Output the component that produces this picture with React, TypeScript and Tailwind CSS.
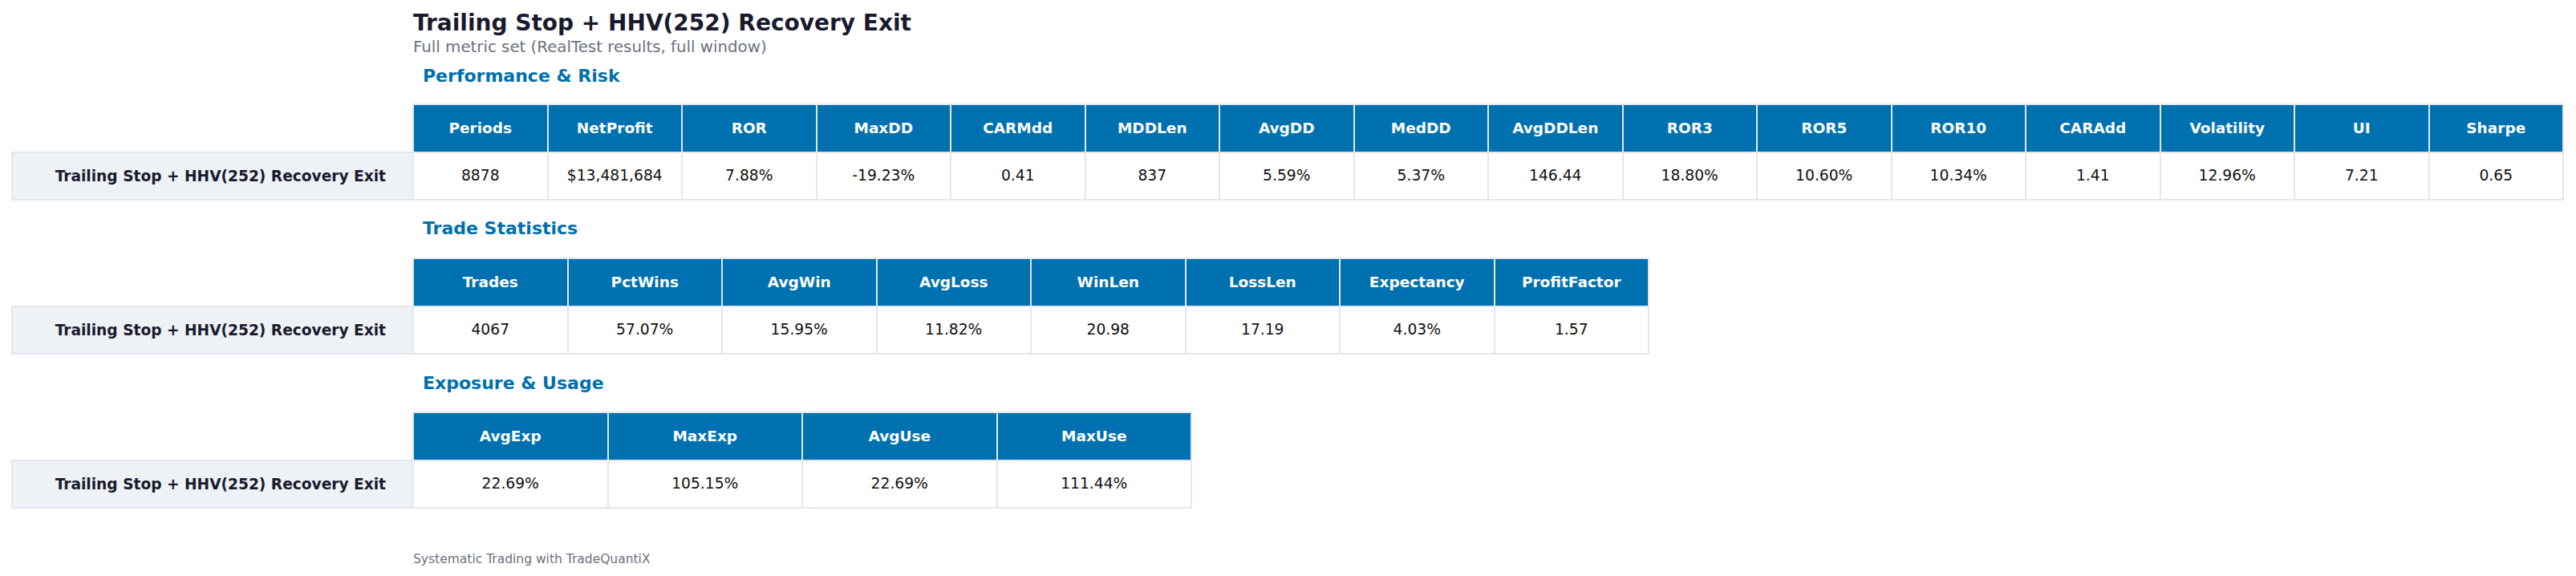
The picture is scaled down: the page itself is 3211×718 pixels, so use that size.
import React from "react";

type Section = {
  title: string;
  width: string;
  cols: string;
  headers: string[];
  values: string[];
};

const LABEL = "Trailing Stop + HHV(252) Recovery Exit";

const sections: Section[] = [
  {
    title: "Performance & Risk",
    width: "w-[2682px]",
    cols: "grid-cols-16",
    headers: [
      "Periods",
      "NetProfit",
      "ROR",
      "MaxDD",
      "CARMdd",
      "MDDLen",
      "AvgDD",
      "MedDD",
      "AvgDDLen",
      "ROR3",
      "ROR5",
      "ROR10",
      "CARAdd",
      "Volatility",
      "UI",
      "Sharpe",
    ],
    values: [
      "8878",
      "$13,481,684",
      "7.88%",
      "-19.23%",
      "0.41",
      "837",
      "5.59%",
      "5.37%",
      "146.44",
      "18.80%",
      "10.60%",
      "10.34%",
      "1.41",
      "12.96%",
      "7.21",
      "0.65",
    ],
  },
  {
    title: "Trade Statistics",
    width: "w-[1542px]",
    cols: "grid-cols-8",
    headers: [
      "Trades",
      "PctWins",
      "AvgWin",
      "AvgLoss",
      "WinLen",
      "LossLen",
      "Expectancy",
      "ProfitFactor",
    ],
    values: ["4067", "57.07%", "15.95%", "11.82%", "20.98", "17.19", "4.03%", "1.57"],
  },
  {
    title: "Exposure & Usage",
    width: "w-[972px]",
    cols: "grid-cols-4",
    headers: ["AvgExp", "MaxExp", "AvgUse", "MaxUse"],
    values: ["22.69%", "105.15%", "22.69%", "111.44%"],
  },
];

function Heading({ text, className }: { text: string; className: string }) {
  return (
    <div
      className={`ml-[513px] text-[22px] leading-[26px] font-bold text-[#0070ad] whitespace-nowrap ${className}`}
    >
      {text}
    </div>
  );
}

function MetricTable({ s, className }: { s: Section; className: string }) {
  return (
    <div className={`flex ${className}`}>
      <div className="flex w-[500px] shrink-0 flex-col">
        <div className="h-[60px]" />
        <div className="flex h-[61px] items-center justify-end border-2 border-r-0 border-[#e4e6eb] bg-[#eef1f6] pr-[33px] text-[18.6px] font-bold text-[#1a1a2e] whitespace-nowrap">
          {LABEL}
        </div>
      </div>
      <div
        className={`grid ${s.cols} ${s.width} shrink-0 gap-[2px] bg-[#e4e6eb] p-[2px]`}
      >
        {s.headers.map((h) => (
          <div
            key={h}
            className="flex h-[58px] items-center justify-center bg-[#0071b0] text-[18.5px] font-bold text-white whitespace-nowrap"
          >
            {h}
          </div>
        ))}
        {s.values.map((v, i) => (
          <div
            key={i}
            className="flex h-[57px] items-center justify-center bg-white text-[18.7px] text-[#111111] whitespace-nowrap"
          >
            {v}
          </div>
        ))}
      </div>
    </div>
  );
}

export default function App() {
  return (
    <div
      className="min-h-screen w-[3211px] bg-white pl-[14px]"
      style={{ fontFamily: '"DejaVu Sans", "Liberation Sans", sans-serif' }}
    >
      <div className="ml-[501px] pt-[13px] text-[28px] leading-[32px] font-bold text-[#1a1a2e] whitespace-nowrap">
        Trailing Stop + HHV(252) Recovery Exit
      </div>
      <div className="ml-[501px] mt-[2px] text-[19.8px] leading-[23px] text-[#6b7280] whitespace-nowrap">
        Full metric set (RealTest results, full window)
      </div>

      <Heading text={sections[0].title} className="mt-[12px]" />
      <MetricTable s={sections[0]} className="mt-[21px]" />

      <Heading text={sections[1].title} className="mt-[22px]" />
      <MetricTable s={sections[1]} className="mt-[23px]" />

      <Heading text={sections[2].title} className="mt-[23px]" />
      <MetricTable s={sections[2]} className="mt-[22px]" />

      <div className="ml-[501px] mt-[54px] text-[15.5px] leading-[18px] text-[#6b7280] whitespace-nowrap">
        Systematic Trading with TradeQuantiX
      </div>
    </div>
  );
}
